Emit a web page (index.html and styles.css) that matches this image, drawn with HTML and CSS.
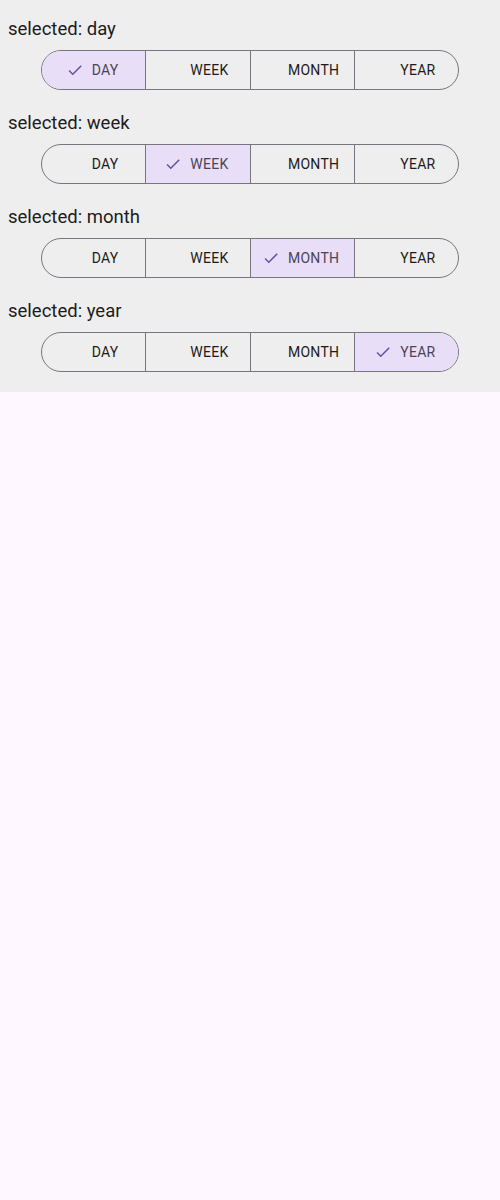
FILE: index.html
```html
<!DOCTYPE html>
<html>
<head>
<meta charset="utf-8">
<link rel="stylesheet" href="styles.css">
</head>
<body>
<div class="panel">
  <div class="group">
    <div class="label">selected: day</div>
    <div class="seg-wrap">
      <div class="segs">
        <div class="seg sel"><svg class="chk" viewBox="0 0 24 24"><path d="M9 16.17L4.83 12l-1.42 1.41L9 19 21 7l-1.41-1.41z"/></svg><span>DAY</span></div>
        <div class="seg"><span class="sp"></span><span>WEEK</span></div>
        <div class="seg"><span class="sp"></span><span>MONTH</span></div>
        <div class="seg"><span class="sp"></span><span>YEAR</span></div>
      </div>
    </div>
  </div>
  <div class="group">
    <div class="label">selected: week</div>
    <div class="seg-wrap">
      <div class="segs">
        <div class="seg"><span class="sp"></span><span>DAY</span></div>
        <div class="seg sel"><svg class="chk" viewBox="0 0 24 24"><path d="M9 16.17L4.83 12l-1.42 1.41L9 19 21 7l-1.41-1.41z"/></svg><span>WEEK</span></div>
        <div class="seg"><span class="sp"></span><span>MONTH</span></div>
        <div class="seg"><span class="sp"></span><span>YEAR</span></div>
      </div>
    </div>
  </div>
  <div class="group">
    <div class="label">selected: month</div>
    <div class="seg-wrap">
      <div class="segs">
        <div class="seg"><span class="sp"></span><span>DAY</span></div>
        <div class="seg"><span class="sp"></span><span>WEEK</span></div>
        <div class="seg sel"><svg class="chk" viewBox="0 0 24 24"><path d="M9 16.17L4.83 12l-1.42 1.41L9 19 21 7l-1.41-1.41z"/></svg><span>MONTH</span></div>
        <div class="seg"><span class="sp"></span><span>YEAR</span></div>
      </div>
    </div>
  </div>
  <div class="group">
    <div class="label">selected: year</div>
    <div class="seg-wrap">
      <div class="segs">
        <div class="seg"><span class="sp"></span><span>DAY</span></div>
        <div class="seg"><span class="sp"></span><span>WEEK</span></div>
        <div class="seg"><span class="sp"></span><span>MONTH</span></div>
        <div class="seg sel"><svg class="chk" viewBox="0 0 24 24"><path d="M9 16.17L4.83 12l-1.42 1.41L9 19 21 7l-1.41-1.41z"/></svg><span>YEAR</span></div>
      </div>
    </div>
  </div>
</div>
</body>
</html>
```

FILE: styles.css
```css
html, body {
  margin: 0;
  padding: 0;
}
body {
  background: #fef7ff;
  font-family: Roboto, "Liberation Sans", sans-serif;
  color: #1d1b20;
}
.panel {
  background: #eeeeee;
  padding: 8px 0 8px 0;
}
.group {
  padding-bottom: 12px;
}
.label {
  height: 42px;
  line-height: 42px;
  font-size: 18.5px;
  padding-left: 8px;
}
.seg-wrap {
  display: flex;
  justify-content: center;
}
.segs {
  display: flex;
  width: 418px;
  height: 40px;
  box-sizing: border-box;
  border: 1px solid #79747e;
  border-radius: 20px;
  overflow: hidden;
}
.seg {
  flex: 1 1 0;
  display: flex;
  align-items: center;
  justify-content: center;
  gap: 8px;
  padding-right: 3px;
  font-size: 14px;
  font-weight: 400;
  letter-spacing: 0.3px;
  color: #1d1b20;
}
.seg + .seg {
  border-left: 1px solid #79747e;
}
.seg.sel {
  background: #e8def8;
  color: #4a4458;
}
.chk {
  width: 18px;
  height: 18px;
  fill: #6750a4;
  flex: none;
}
.sp {
  width: 18px;
  height: 18px;
  flex: none;
}
```
